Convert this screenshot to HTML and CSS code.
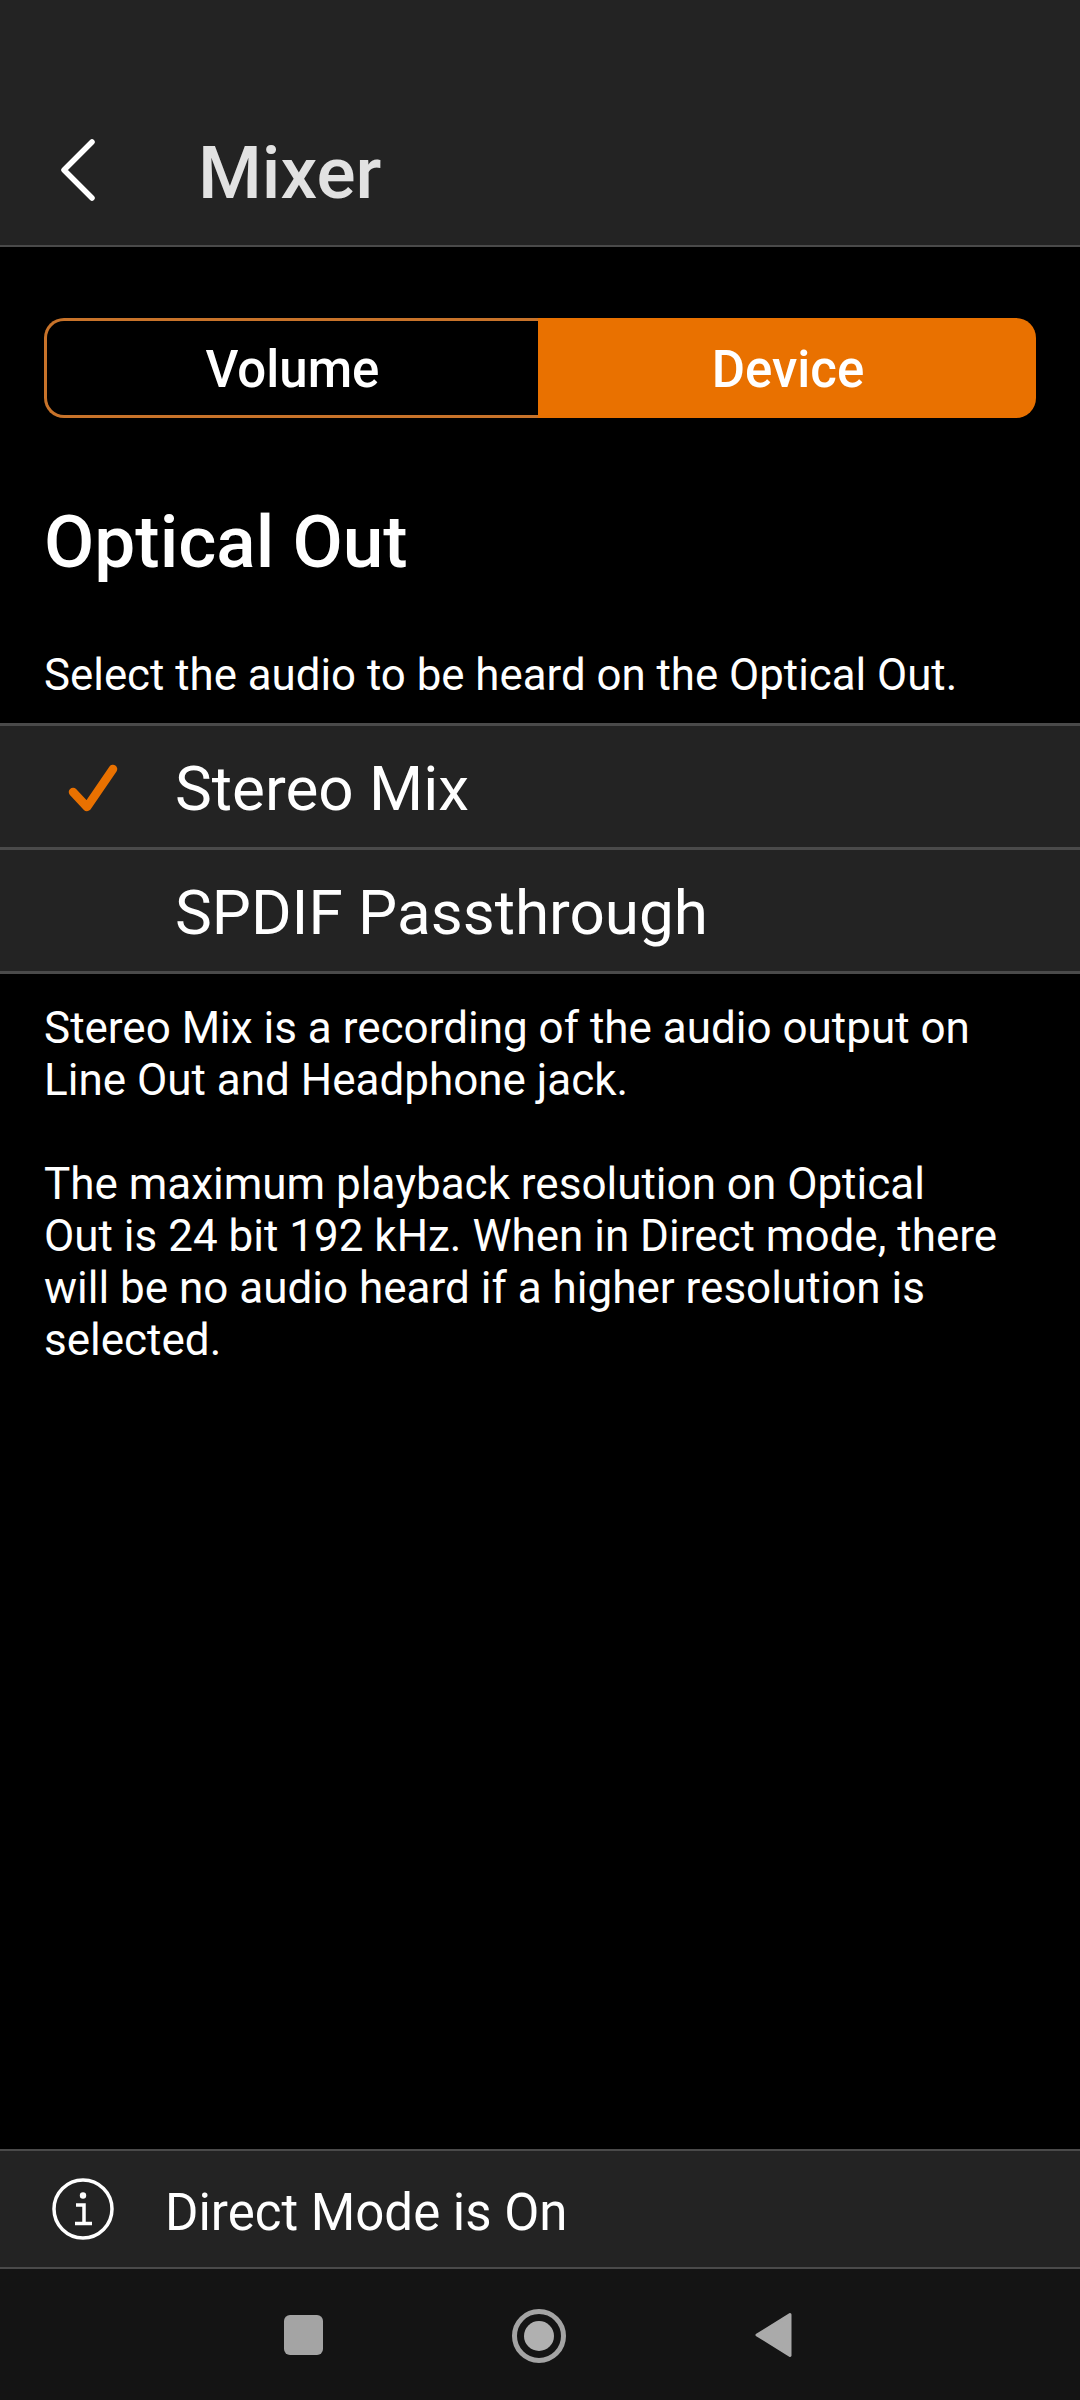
FILE: index.html
```html
<!DOCTYPE html>
<html lang="en">

<head>
    <meta charset="UTF-8">
    <meta name="viewport" content="width=device-width, initial-scale=1.0">
    <title>Mixer</title>
    <link rel="stylesheet" href="styles.css">
</head>

<body>

    <nav class="topbar">
        <svg class="back" width="34" height="62" viewBox="0 0 34 62">
            <path d="M31 3 L3 31 L31 59" fill="none" stroke="#fff" stroke-width="5.5" stroke-linecap="round" stroke-linejoin="round" />
        </svg>
        <div class="title">Mixer</div>
    </nav>

    <div class="content">
        <div class="tabs">
            <div class="tab">Volume</div>
            <div class="tab active">Device</div>
        </div>

        <h1 class="heading">Optical Out</h1>
        <p class="lead">Select the audio to be heard on the Optical Out.</p>

        <div class="list">
            <div class="row">
                <svg class="check" width="50" height="50" viewBox="0 0 50 50">
                    <path d="M5 28 L19 43 L45 5" fill="none" stroke="#e97100" stroke-width="8.5" stroke-linecap="round" stroke-linejoin="round" />
                </svg>
                <span>Stereo Mix</span>
            </div>
            <div class="row">
                <span>SPDIF Passthrough</span>
            </div>
        </div>

        <div class="notes">
            <p>Stereo Mix is a recording of the audio output on Line Out and Headphone jack.</p>
            <p>The maximum playback resolution on Optical Out is 24 bit 192 kHz. When in Direct mode, there will be no audio heard if a higher resolution is selected.</p>
        </div>
    </div>

    <div class="status">
        <svg class="info" width="62" height="62" viewBox="0 0 62 62">
            <circle cx="31" cy="31" r="29" fill="none" stroke="#fff" stroke-width="3.5" />
            <circle cx="31" cy="17.5" r="3.2" fill="#fff" />
            <path d="M24 27 H32 V45 M23 45.5 H40" fill="none" stroke="#fff" stroke-width="3.5" />
        </svg>
        <span>Direct Mode is On</span>
    </div>

    <div class="sysnav">
        <div class="sys-square"></div>
        <div class="sys-home"></div>
        <svg class="sys-back" width="38" height="46" viewBox="0 0 38 46">
            <path d="M35 2.5 L2 23 L35 43.5 Z" fill="#aaa" stroke="#aaa" stroke-width="3" stroke-linejoin="round" />
        </svg>
    </div>

</body>

</html>
```

FILE: styles.css
```css
* {
    box-sizing: border-box;
}

body {
    margin: 0;
    width: 1080px;
    height: 2400px;
    display: flex;
    flex-direction: column;
    background-color: #000;
    color: #fff;
    font-family: Roboto, sans-serif;
}

.topbar {
    height: 247px;
    padding: 96px 0 0 61px;
    display: flex;
    align-items: flex-start;
    background-color: #232323;
    border-bottom: 2px solid #4a4a4a;
}

.back {
    margin-top: 43px;
    flex-shrink: 0;
}

.title {
    margin-left: 103px;
    font-size: 73px;
    line-height: 154px;
    font-weight: 500;
    color: #e2e2e2;
}

.content {
    flex: 1;
}

.tabs {
    margin: 71px 44px 0 44px;
    height: 100px;
    display: flex;
}

.tab {
    width: 494px;
    border: 3px solid #c8732a;
    border-right: none;
    border-radius: 20px 0 0 20px;
    font-size: 51px;
    font-weight: 500;
    line-height: 98px;
    text-align: center;
}

.tab.active {
    flex: 1;
    padding-left: 2px;
    border: none;
    border-radius: 0 20px 20px 0;
    background-color: #e97100;
    line-height: 104px;
}

.heading {
    margin: 79px 44px 0 44px;
    font-size: 73px;
    line-height: 90px;
    font-weight: 500;
}

.lead {
    margin: 62px 44px 0 44px;
    font-size: 43.8px;
    line-height: 52px;
}

.list {
    margin-top: 22px;
    border-top: 3px solid #4a4a4a;
}

.row {
    height: 124px;
    padding-left: 175px;
    padding-top: 4px;
    display: flex;
    align-items: center;
    background-color: #232323;
    border-bottom: 3px solid #4a4a4a;
    font-size: 62px;
    position: relative;
}

.check {
    position: absolute;
    left: 68px;
    top: 38px;
}

.notes {
    margin: 28px 80px 0 44px;
    font-size: 44px;
    line-height: 52px;
}

.notes p {
    margin: 0 0 52px 0;
}

.status {
    height: 120px;
    padding-left: 52px;
    padding-top: 6px;
    display: flex;
    align-items: center;
    background-color: #232323;
    border-top: 2px solid #4a4a4a;
    border-bottom: 2px solid #4a4a4a;
    font-size: 51px;
}

.info {
    margin-right: 51px;
    margin-top: -6px;
}

.sysnav {
    height: 131px;
    padding-top: 40px;
    display: flex;
    align-items: flex-start;
    background-color: #141414;
}

.sys-square {
    width: 39px;
    height: 40px;
    margin: 6px 0 0 284px;
    border-radius: 6px;
    background-color: #a4a4a4;
}

.sys-home {
    width: 54px;
    height: 54px;
    margin: 0 0 0 189px;
    border: 5px solid #a4a4a4;
    border-radius: 50%;
    position: relative;
}

.sys-home::after {
    content: "";
    position: absolute;
    left: 7px;
    top: 7px;
    width: 30px;
    height: 30px;
    border-radius: 50%;
    background-color: #b0b0b0;
}

.sys-back {
    margin: 3px 0 0 189px;
}
```
